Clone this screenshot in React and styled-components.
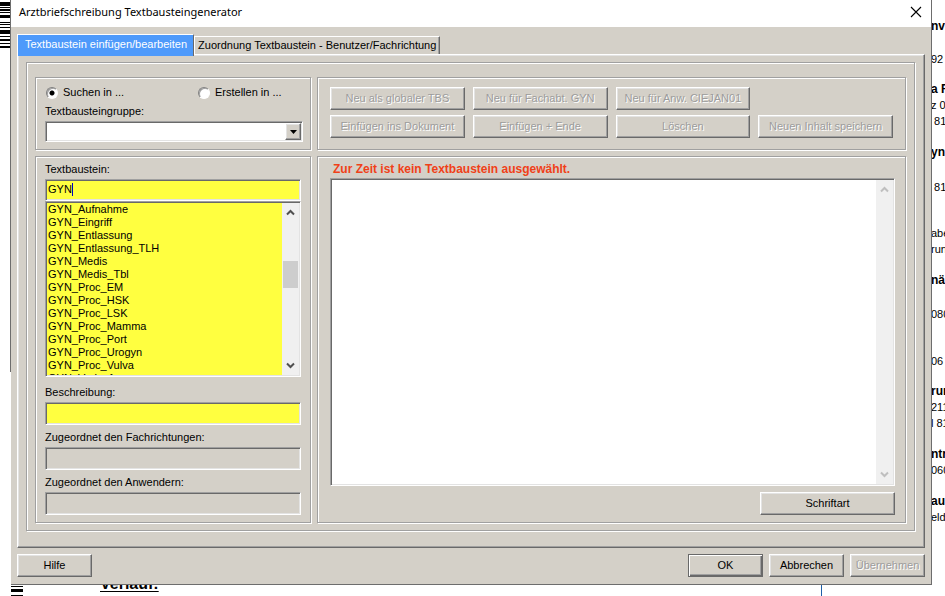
import React, { useState } from "react";
import styled, { createGlobalStyle, css } from "styled-components";

const GlobalStyle = createGlobalStyle`
  *, *::before, *::after { box-sizing: border-box; }
  body {
    margin: 0;
    background: #fff;
    color: #000;
    font: 11px/13px "Liberation Sans", Arial, sans-serif;
  }
  button, input, select, textarea { font: inherit; color: inherit; border-radius: 0; margin: 0; }
`;

const raised = css`
  border: 1px solid;
  border-color: #fff #696969 #696969 #fff;
  box-shadow: inset -1px -1px 0 #a0a0a0, inset 1px 1px 0 #e3e3e3;
`;

const sunken = css`
  border: 1px solid;
  border-color: #a0a0a0 #fff #fff #a0a0a0;
  box-shadow: inset 1px 1px 0 #696969, inset -1px -1px 0 #e3e3e3;
`;

/* ---------- document behind the dialog ---------- */

const Desktop = styled.div`
  display: grid;
  grid-template-columns: 11px minmax(0, 1fr) 13px;
  grid-template-rows: minmax(0, 1fr) 11px;
  min-height: 100vh;
`;

const LeftMargin = styled.div`
  grid-row: 1 / 3;
`;

const LeftEdge = styled.div`
  height: 372px;
  border-right: 1px solid #6d6d6d;
`;

const RightMargin = styled.div`
  grid-column: 3;
  grid-row: 1 / 3;
  overflow: hidden;
  padding-top: 18px;
  line-height: 16px;
`;

const LetterBlock = styled.div`
  margin-bottom: ${(p) => p.$after}px;
  margin-left: -1px;
`;

const LetterLine = styled.div`
  white-space: pre;
  font-weight: ${(p) => (p.$bold ? 700 : 400)};
  font-size: ${(p) => (p.$bold ? 12 : 11)}px;
`;

const BottomMargin = styled.div`
  grid-column: 2;
  display: flex;
  align-items: flex-end;
  overflow: hidden;
`;

const Heading = styled.span`
  margin-left: 77px;
  font-size: 16px;
  line-height: 24px;
  font-weight: 700;
  text-decoration: underline;
  text-decoration-thickness: 1px;
  text-underline-offset: 2px;
`;

const ColumnRule = styled.span`
  width: 1px;
  height: 11px;
  margin-left: auto;
  margin-right: 110px;
  background: #1f5fa8;
`;

const BarcodeArt = styled.svg`
  display: block;
  flex: none;
`;

/* ---------- dialog ---------- */

const Dialog = styled.main`
  grid-column: 2;
  grid-row: 1;
  display: flex;
  flex-direction: column;
  background: #d4d0c8;
  border-right: 1px solid #6d6d6d;
  border-bottom: 1px solid #6d6d6d;
`;

const TitleBar = styled.header`
  display: flex;
  align-items: center;
  justify-content: space-between;
  height: 27px;
  padding: 0 9px 4px 8px;
  background: #fff;
`;

const Title = styled.h1`
  margin: 0;
  font: 400 11px/16px "Noto Sans", sans-serif;
`;

const CloseButton = styled.button`
  display: flex;
  padding: 0;
  border: 0;
  background: none;
`;

const Body = styled.div`
  flex: 1;
  display: flex;
  flex-direction: column;
  padding: 7px 6px;
`;

const Tabs = styled.div`
  display: flex;
  align-items: flex-end;
  z-index: 1;
  margin-bottom: -2px;
`;

const Tab = styled.button`
  height: ${(p) => (p.$active ? 22 : 18)}px;
  padding: ${(p) => (p.$active ? "0 6px 3px 7px" : "0 3px")};
  margin-bottom: ${(p) => (p.$active ? 0 : 2)}px;
  border: solid;
  border-width: 1px 1px 0;
  border-color: #fff #696969 #fff #fff;
  box-shadow: inset -1px 0 0 ${(p) => (p.$active ? "#4e9afb" : "#a0a0a0")};
  background: ${(p) => (p.$active ? "#4e9afb" : "#d4d0c8")};
  color: ${(p) => (p.$active ? "#fff" : "#000")};
  white-space: nowrap;
`;

const TabPanel = styled.section`
  flex: 1;
  display: flex;
  padding: 7px 9px 16px 8px;
  ${raised}
`;

const groove = css`
  border: 1px solid #a0a0a0;
  box-shadow: 1px 1px 0 #fff, inset 1px 1px 0 #fff;
`;

const Frame = styled.div`
  flex: 1;
  display: grid;
  grid-template-columns: 276px minmax(0, 1fr);
  grid-template-rows: 73px minmax(0, 1fr);
  gap: 6px;
  padding: 14px 8px 7px;
  ${groove}
`;

const SearchGroup = styled.div`
  padding: 8px 7px 0 9px;
  ${groove}
`;

const ActionGroup = styled.div`
  display: grid;
  grid-template-columns: repeat(4, minmax(0, 135px));
  grid-auto-rows: 23px;
  gap: 5px 8px;
  padding: 9px 12px;
  ${groove}
`;

const BlockGroup = styled.div`
  display: flex;
  flex-direction: column;
  padding: 6px 9px 7px;
  ${groove}
`;

const EditorGroup = styled.div`
  display: flex;
  flex-direction: column;
  padding: 6px 10px 7px 12px;
  ${groove}
`;

const RadioRow = styled.div`
  display: grid;
  grid-template-columns: 152px auto;
  margin-bottom: 6px;
`;

const RadioLabel = styled.label`
  display: flex;
  align-items: center;
  gap: 5px;
  padding-left: 1px;
`;

const Radio = styled.input`
  appearance: none;
  width: 12px;
  height: 12px;
  border: 1px solid;
  border-color: #808080 #fff #fff #808080;
  border-radius: 50%;
  background: #fff;
  box-shadow: inset 1px 1px 0 #a0a0a0;
  &:checked {
    background: radial-gradient(circle, #000 2px, #fff 3px);
  }
`;

const Label = styled.label`
  display: block;
  height: 13px;
  margin-bottom: 3px;
`;

const Combo = styled.div`
  display: grid;
  height: 21px;
  padding: 1px;
  background: #fff;
  ${sunken}
`;

const ComboSelect = styled.select`
  grid-area: 1 / 1;
  appearance: none;
  border: 0;
  background: none;
  outline: none;
`;

const ComboArrow = styled.span`
  grid-area: 1 / 1;
  justify-self: end;
  display: flex;
  align-items: center;
  justify-content: center;
  width: 16px;
  background: #d4d0c8;
  pointer-events: none;
  ${raised}
`;

const Field = styled.input`
  width: 100%;
  height: 23px;
  margin-bottom: 6px;
  padding: 0 3px;
  background: ${(p) => (p.$yellow ? "#ffff40" : "#d4d0c8")};
  outline: none;
  ${sunken}
  &:last-child { margin-bottom: 0; }
`;

const SearchField = styled.div`
  display: flex;
  align-items: center;
  height: 22px;
  padding: 0 0 1px 2px;
  background: #ffff40;
  ${sunken}
`;

const SearchInput = styled.input`
  field-sizing: content;
  padding: 0;
  border: 0;
  background: none;
  outline: none;
  caret-color: transparent;
`;

const Caret = styled.span`
  width: 1px;
  height: 13px;
  background: #0000c0;
`;

const ListFrame = styled.div`
  flex: 1 0 176px;
  height: 0;
  display: flex;
  margin-bottom: 9px;
  padding: 1px;
  background: #ffff40;
  ${sunken}
`;

const List = styled.select`
  flex: 1;
  min-width: 0;
  height: 100%;
  padding: 0;
  border: 0;
  background: none;
  outline: none;
  overflow: hidden;
  option {
    height: 13px;
    min-height: 13px;
    padding: 0 1px;
    line-height: 13px;
  }
`;

const ScrollTrack = styled.div`
  flex: none;
  width: 17px;
  display: flex;
  flex-direction: column;
  align-items: center;
  justify-content: space-between;
  padding: 6px 0;
  background: #f0f0f0;
  color: ${(p) => (p.$disabled ? "#bfbfbf" : "#505050")};
`;

const ScrollThumb = styled.div`
  width: 15px;
  height: 27px;
  margin-bottom: 30px;
  background: #cdcdcd;
`;

const Notice = styled.label`
  height: 13px;
  margin-bottom: 2px;
  padding-left: 3px;
  color: #f04018;
  font-size: 12px;
  font-weight: 700;
`;

const EditorFrame = styled.div`
  flex: 1;
  display: flex;
  margin-bottom: 6px;
  padding: 1px;
  background: #fff;
  ${sunken}
`;

const Editor = styled.textarea`
  flex: 1;
  min-width: 0;
  resize: none;
  border: 0;
  padding: 2px;
  background: #fff;
  outline: none;
`;

const Button = styled.button`
  width: ${(p) => (p.$wide ? 135 : 75)}px;
  max-width: 100%;
  height: 23px;
  padding: 0;
  background: #d4d0c8;
  white-space: nowrap;
  ${raised}
  ${(p) =>
    p.$primary &&
    css`
      border-color: #696969;
      box-shadow: inset 1px 1px 0 #fff, inset -1px -1px 0 #696969, inset -2px -2px 0 #a0a0a0;
    `}
  &:disabled {
    color: #9c9c9c;
    text-shadow: 1px 1px 0 #fff;
  }
`;

const FontButton = styled(Button)`
  align-self: flex-end;
`;

const Footer = styled.footer`
  display: flex;
  gap: 6px;
  margin-top: 6px;
`;

const HelpButton = styled(Button)`
  margin-right: auto;
`;

const Chevron = ({ down }) => (
  <svg width="9" height="7" viewBox="0 0 9 7" aria-hidden="true">
    <path d={down ? "M1 1.5 4.5 5 8 1.5" : "M1 5.5 4.5 2 8 5.5"} fill="none" stroke="currentColor" strokeWidth="2" />
  </svg>
);

/* [top, thickness] of every bar */
const topBars = [[2, 4], [7, 1], [9, 2], [12, 1], [15, 3], [22, 1], [24, 1], [27, 1], [30, 4], [36, 1], [39, 2], [43, 1], [46, 2]];
const bottomBars = [[1, 1], [4, 3], [10, 1]];

const Barcode = ({ width, height, bars }) => (
  <BarcodeArt width={width} height={height} aria-hidden="true">
    <rect width={width} height={height} fill="#fff" />
    {bars.map(([y, h]) => (
      <rect key={y} y={y} width={width} height={h} fill="#000" />
    ))}
  </BarcodeArt>
);

const letterBlocks = [
  { after: 17, lines: [["nv", true]] },
  { after: 14, lines: [["92"]] },
  { after: 15, lines: [["a F", true], ["z 02"], [" 81"]] },
  { after: 19, lines: [["yn", true]] },
  { after: 30, lines: [[" 81"]] },
  { after: 15, lines: [["abe"], ["run"]] },
  { after: 18, lines: [["näk", true]] },
  { after: 31, lines: [["080"]] },
  { after: 14, lines: [["06"]] },
  { after: 15, lines: [["run", true], ["211"], ["l 81"]] },
  { after: 15, lines: [["ntr", true], ["060"]] },
  { after: 0, lines: [["au", true], ["eldo"]] },
];

const blocks = [
  "GYN_Aufnahme", "GYN_Eingriff", "GYN_Entlassung", "GYN_Entlassung_TLH", "GYN_Medis",
  "GYN_Medis_Tbl", "GYN_Proc_EM", "GYN_Proc_HSK", "GYN_Proc_LSK", "GYN_Proc_Mamma",
  "GYN_Proc_Port", "GYN_Proc_Urogyn", "GYN_Proc_Vulva", "GYN_Verlauf",
];

const actions = [
  "Neu als globaler TBS", "Neu für Fachabt. GYN", "Neu für Anw. CIEJAN01", null,
  "Einfügen ins Dokument", "Einfügen + Ende", "Löschen", "Neuen Inhalt speichern",
];

export default function App() {
  const [mode, setMode] = useState("search");
  const [query, setQuery] = useState("GYN");

  return (
    <>
      <GlobalStyle />
      <Desktop>
        <LeftMargin>
          <LeftEdge>
            <Barcode width={10} height={50} bars={topBars} />
          </LeftEdge>
        </LeftMargin>

        <Dialog>
          <TitleBar>
            <Title>Arztbriefschreibung Textbausteingenerator</Title>
            <CloseButton type="button" aria-label="Schließen">
              <svg width="12" height="12" viewBox="0 0 12 12" aria-hidden="true">
                <path d="M1 1 11 11M11 1 1 11" stroke="#000" strokeWidth="1.1" />
              </svg>
            </CloseButton>
          </TitleBar>

          <Body>
            <Tabs role="tablist">
              <Tab type="button" role="tab" aria-selected="true" $active>
                Textbaustein einfügen/bearbeiten
              </Tab>
              <Tab type="button" role="tab" aria-selected="false">
                Zuordnung Textbaustein - Benutzer/Fachrichtung
              </Tab>
            </Tabs>

            <TabPanel role="tabpanel">
              <Frame>
                <SearchGroup>
                  <RadioRow>
                    <RadioLabel>
                      <Radio type="radio" name="mode" checked={mode === "search"} onChange={() => setMode("search")} />
                      Suchen in ...
                    </RadioLabel>
                    <RadioLabel>
                      <Radio type="radio" name="mode" checked={mode === "create"} onChange={() => setMode("create")} />
                      Erstellen in ...
                    </RadioLabel>
                  </RadioRow>
                  <Label htmlFor="group">Textbausteingruppe:</Label>
                  <Combo>
                    <ComboSelect id="group" />
                    <ComboArrow>
                      <svg width="7" height="4" viewBox="0 0 7 4" aria-hidden="true">
                        <path d="M0 0h7L3.5 4z" />
                      </svg>
                    </ComboArrow>
                  </Combo>
                </SearchGroup>

                <ActionGroup>
                  {actions.map((text, i) =>
                    text ? (
                      <Button key={text} type="button" $wide disabled>{text}</Button>
                    ) : (
                      <span key={i} />
                    )
                  )}
                </ActionGroup>

                <BlockGroup>
                  <Label htmlFor="query">Textbaustein:</Label>
                  <SearchField>
                    <SearchInput id="query" value={query} onChange={(e) => setQuery(e.target.value)} />
                    <Caret />
                  </SearchField>
                  <ListFrame>
                    <List size={14} aria-label="Textbausteine">
                      {blocks.map((name) => (
                        <option key={name}>{name}</option>
                      ))}
                    </List>
                    <ScrollTrack>
                      <Chevron />
                      <ScrollThumb />
                      <Chevron down />
                    </ScrollTrack>
                  </ListFrame>
                  <Label htmlFor="description">Beschreibung:</Label>
                  <Field id="description" $yellow />
                  <Label htmlFor="departments">Zugeordnet den Fachrichtungen:</Label>
                  <Field id="departments" readOnly />
                  <Label htmlFor="users">Zugeordnet den Anwendern:</Label>
                  <Field id="users" readOnly />
                </BlockGroup>

                <EditorGroup>
                  <Notice htmlFor="content">Zur Zeit ist kein Textbaustein ausgewählt.</Notice>
                  <EditorFrame>
                    <Editor id="content" />
                    <ScrollTrack $disabled>
                      <Chevron />
                      <Chevron down />
                    </ScrollTrack>
                  </EditorFrame>
                  <FontButton type="button" $wide>Schriftart</FontButton>
                </EditorGroup>
              </Frame>
            </TabPanel>

            <Footer>
              <HelpButton type="button">Hilfe</HelpButton>
              <Button type="button" $primary>OK</Button>
              <Button type="button">Abbrechen</Button>
              <Button type="button" disabled>Übernehmen</Button>
            </Footer>
          </Body>
        </Dialog>

        <RightMargin>
          {letterBlocks.map((block, i) => (
            <LetterBlock key={i} $after={block.after}>
              {block.lines.map(([text, bold]) => (
                <LetterLine key={text} $bold={bold}>{text}</LetterLine>
              ))}
            </LetterBlock>
          ))}
        </RightMargin>

        <BottomMargin>
          <Barcode width={12} height={11} bars={bottomBars} />
          <Heading>Verlauf:</Heading>
          <ColumnRule />
        </BottomMargin>
      </Desktop>
    </>
  );
}
